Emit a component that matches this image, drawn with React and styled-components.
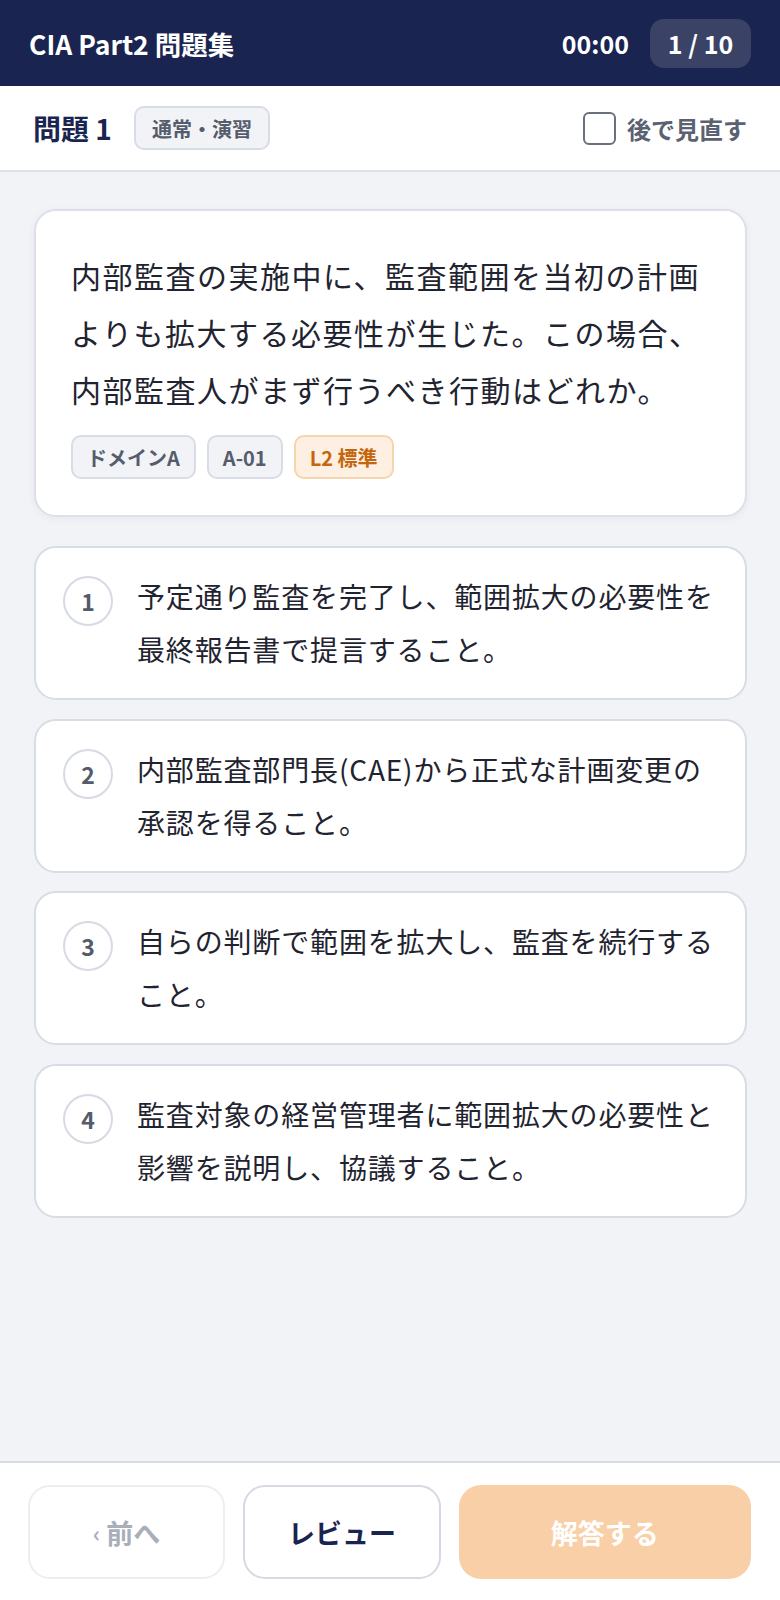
import React, { useState } from "react";
import styled, { createGlobalStyle } from "styled-components";

const GlobalStyle = createGlobalStyle`
  html, body {
    margin: 0;
    padding: 0;
    background: #f1f3f7;
  }
  body {
    font-family: "Noto Sans CJK JP", "Noto Sans", sans-serif;
    color: #1f2430;
  }
  * { box-sizing: border-box; }
`;

const question = {
  no: 1,
  mode: "通常・演習",
  text: "内部監査の実施中に、監査範囲を当初の計画よりも拡大する必要性が生じた。この場合、内部監査人がまず行うべき行動はどれか。",
  tags: [
    { label: "ドメインA" },
    { label: "A-01" },
    { label: "L2 標準", level: true },
  ],
  choices: [
    "予定通り監査を完了し、範囲拡大の必要性を最終報告書で提言すること。",
    "内部監査部門長(CAE)から正式な計画変更の承認を得ること。",
    "自らの判断で範囲を拡大し、監査を続行すること。",
    "監査対象の経営管理者に範囲拡大の必要性と影響を説明し、協議すること。",
  ],
};

export default function App() {
  const [selected, setSelected] = useState(null);
  const [later, setLater] = useState(false);

  return (
    <Page>
      <GlobalStyle />
      <Header>
        <Title>CIA Part2 問題集</Title>
        <HeaderRight>
          <Timer>00:00</Timer>
          <Counter>1 / 10</Counter>
        </HeaderRight>
      </Header>

      <SubBar>
        <SubLeft>
          <QNo>問題 {question.no}</QNo>
          <ModeTag>{question.mode}</ModeTag>
        </SubLeft>
        <LaterLabel onClick={() => setLater(!later)}>
          <Check $on={later} />
          後で見直す
        </LaterLabel>
      </SubBar>

      <Main>
        <QuestionCard>
          <QuestionText>{question.text}</QuestionText>
          <TagRow>
            {question.tags.map((t) => (
              <Tag key={t.label} $level={t.level}>{t.label}</Tag>
            ))}
          </TagRow>
        </QuestionCard>

        <ChoiceList>
          {question.choices.map((c, i) => (
            <Choice key={i} $active={selected === i} onClick={() => setSelected(i)}>
              <ChoiceNo>{i + 1}</ChoiceNo>
              <ChoiceText>{c}</ChoiceText>
            </Choice>
          ))}
        </ChoiceList>
      </Main>

      <Footer>
        <PrevButton disabled>
          <Chevron>‹</Chevron>前へ
        </PrevButton>
        <ReviewButton>レビュー</ReviewButton>
        <AnswerButton disabled={selected === null}>解答する</AnswerButton>
      </Footer>
    </Page>
  );
}

const Page = styled.div`
  min-height: 100vh;
  display: flex;
  flex-direction: column;
`;

const Header = styled.header`
  height: 86px;
  background: #1a2450;
  color: #fff;
  display: flex;
  align-items: center;
  justify-content: space-between;
  padding: 0 29px;
`;

const Title = styled.h1`
  margin: 0;
  font-size: 26.5px;
  font-weight: 700;
`;

const HeaderRight = styled.div`
  display: flex;
  align-items: center;
  gap: 21px;
`;

const Timer = styled.span`
  font-size: 25px;
  font-weight: 700;
`;

const Counter = styled.span`
  width: 101px;
  height: 49px;
  border-radius: 14px;
  background: #3a4366;
  display: flex;
  align-items: center;
  justify-content: center;
  font-size: 25px;
  font-weight: 700;
`;

const SubBar = styled.div`
  height: 86px;
  background: #fff;
  border-bottom: 2px solid #dde0e8;
  display: flex;
  align-items: center;
  justify-content: space-between;
  padding: 0 33px;
`;

const SubLeft = styled.div`
  display: flex;
  align-items: center;
  gap: 22px;
`;

const QNo = styled.span`
  font-size: 28px;
  font-weight: 700;
  color: #1a2450;
`;

const Tag = styled.span`
  display: inline-flex;
  align-items: center;
  height: 44px;
  padding: 0 14px;
  border-radius: 10px;
  font-size: 20px;
  font-weight: 700;
  background: ${(p) => (p.$level ? "#fdf0e2" : "#f1f3f7")};
  border: 2px solid ${(p) => (p.$level ? "#f5d5ae" : "#d8dce4")};
  color: ${(p) => (p.$level ? "#c4660d" : "#555c6b")};
`;

const ModeTag = styled(Tag)`
  padding: 0 16px;
`;

const LaterLabel = styled.label`
  display: flex;
  align-items: center;
  gap: 11px;
  font-size: 24px;
  font-weight: 700;
  color: #5b6170;
  cursor: pointer;
`;

const Check = styled.span`
  width: 33px;
  height: 33px;
  border: 2.5px solid #6b7080;
  border-radius: 6px;
  background: ${(p) => (p.$on ? "#1a2450" : "#fff")};
`;

const Main = styled.main`
  flex: 1;
  padding: 37px 33px 30px 34px;
`;

const QuestionCard = styled.section`
  background: #fff;
  border: 2px solid #dde0e8;
  border-radius: 22px;
  padding: 36px 34px 36px 35px;
  box-shadow: 0 2px 8px rgba(26, 36, 80, 0.05);
`;

const QuestionText = styled.p`
  margin: 0;
  font-size: 30px;
  line-height: 57px;
  letter-spacing: 0.05em;
  color: #1f2430;
`;

const TagRow = styled.div`
  display: flex;
  gap: 11px;
  margin-top: 17px;
`;

const ChoiceList = styled.div`
  display: flex;
  flex-direction: column;
  gap: 18.5px;
  margin-top: 29px;
`;

const Choice = styled.button`
  display: flex;
  align-items: flex-start;
  gap: 24px;
  width: 100%;
  text-align: left;
  background: #fff;
  border: 2px solid ${(p) => (p.$active ? "#f28c28" : "#d8dce4")};
  border-radius: 22px;
  padding: 22px 28px 22px 27px;
  font-family: inherit;
  cursor: pointer;
`;

const ChoiceNo = styled.span`
  flex: none;
  width: 50px;
  height: 50px;
  margin-top: 6px;
  border-radius: 50%;
  border: 2px solid #d6dae3;
  display: flex;
  align-items: center;
  justify-content: center;
  font-size: 23px;
  font-weight: 700;
  color: #545b6b;
`;

const ChoiceText = styled.span`
  font-size: 28px;
  line-height: 53px;
  letter-spacing: 0.03em;
  color: #1f2430;
`;

const Footer = styled.footer`
  background: #fff;
  border-top: 2px solid #d8dbe4;
  display: flex;
  gap: 18px;
  padding: 22px 29px 21px 28px;
`;

const BaseButton = styled.button`
  height: 94px;
  border-radius: 22px;
  font-family: inherit;
  font-size: 27px;
  font-weight: 700;
  display: flex;
  align-items: center;
  justify-content: center;
  cursor: pointer;
`;

const PrevButton = styled(BaseButton)`
  flex: 190;
  background: #fff;
  border: 2px solid #eceef3;
  color: #a9aeb9;
  cursor: default;
`;

const Chevron = styled.span`
  font-size: 22px;
  margin-right: 6px;
`;

const ReviewButton = styled(BaseButton)`
  flex: 190;
  background: #fff;
  border: 2px solid #d5d9e2;
  color: #1a2450;
`;

const AnswerButton = styled(BaseButton)`
  flex: 294;
  background: #f9cfa8;
  border: none;
  color: #fff;
  &:disabled { cursor: default; }
`;
